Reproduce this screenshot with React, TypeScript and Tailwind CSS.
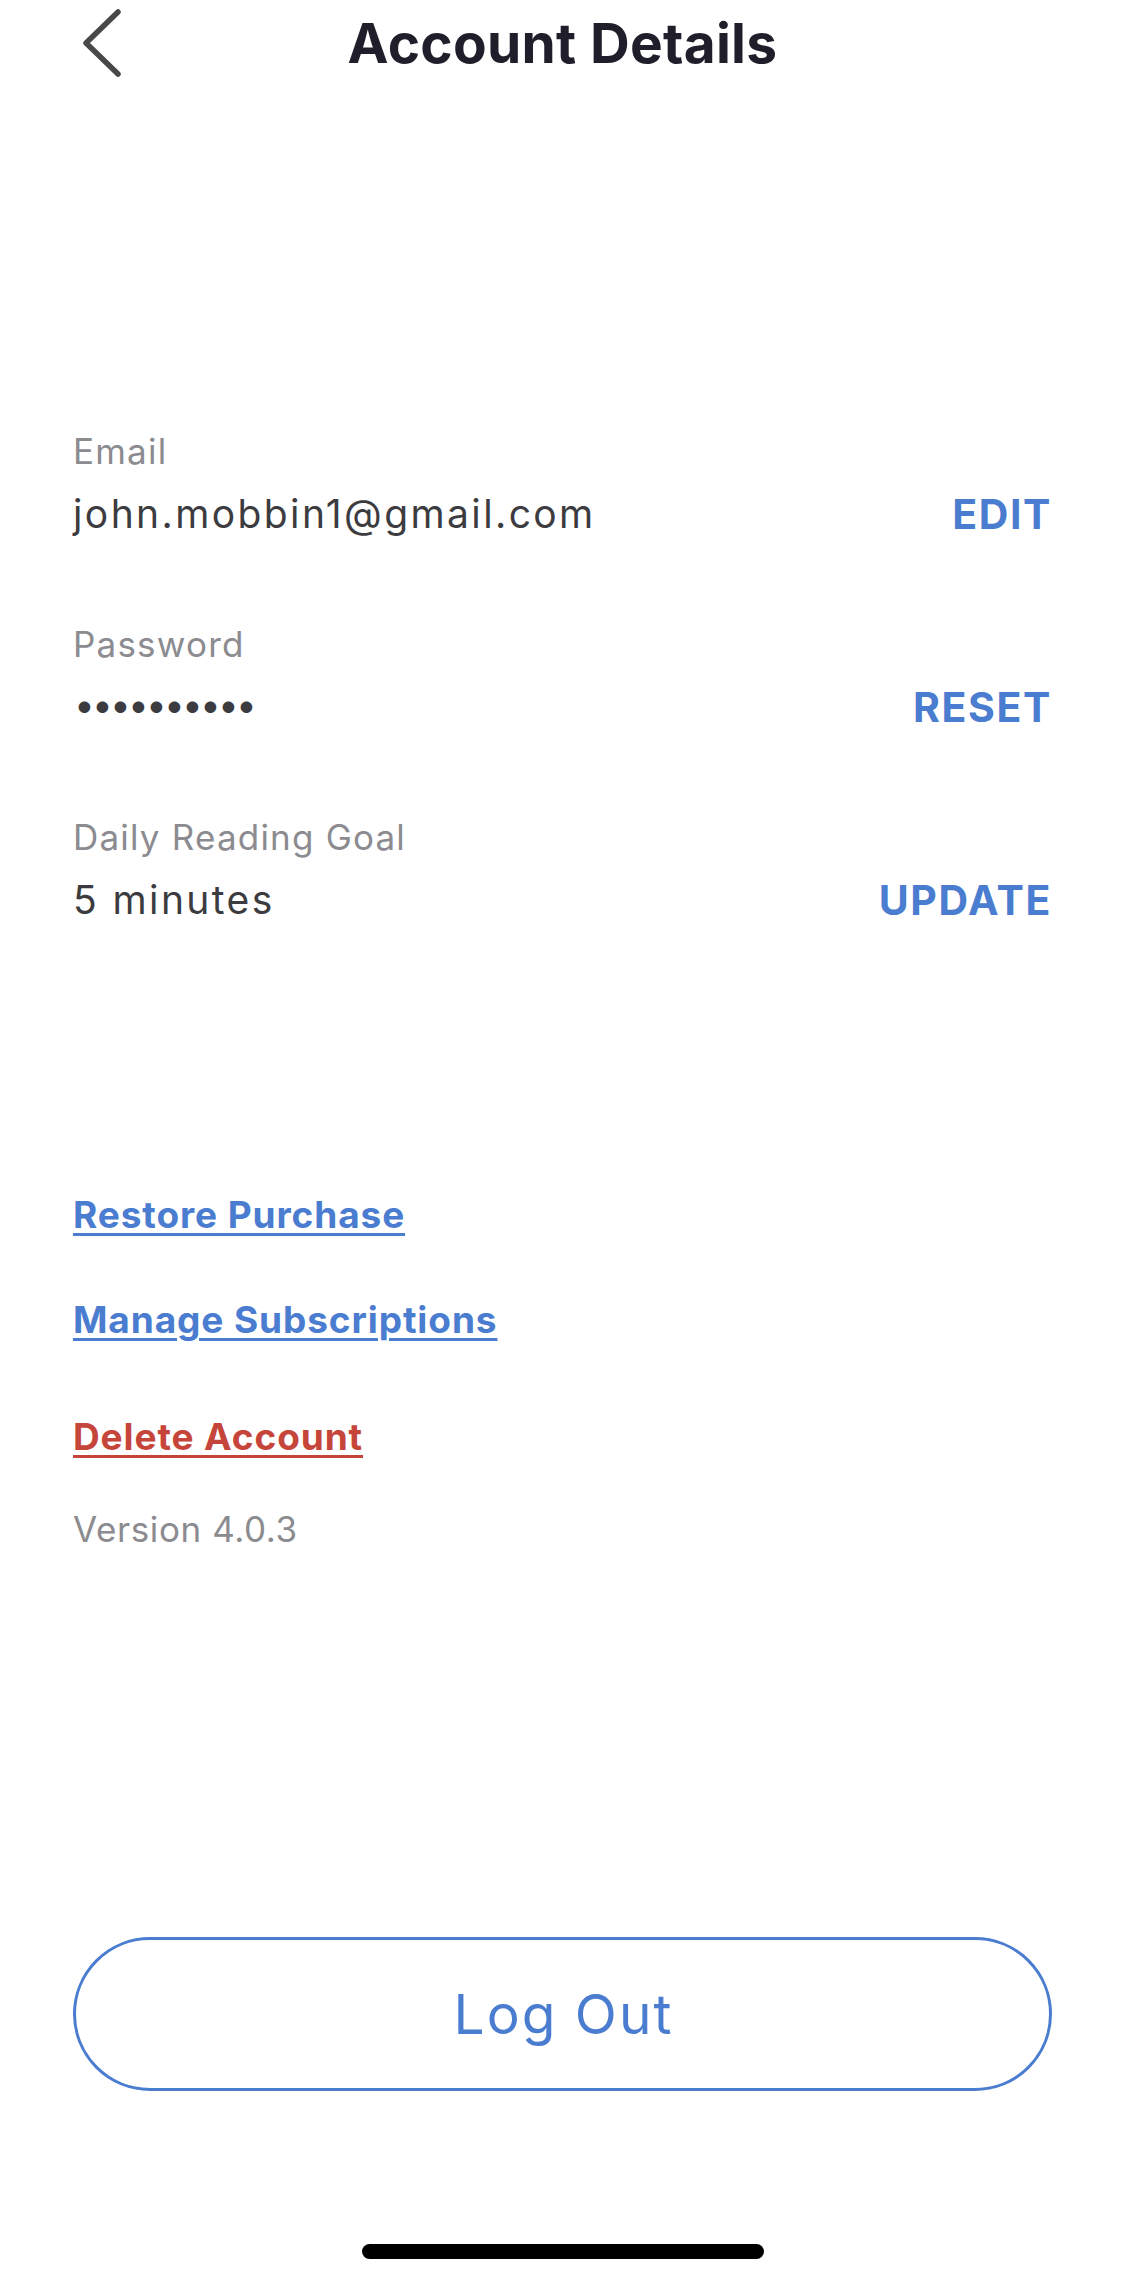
import React from "react";

const font = { fontFamily: "Inter, 'Noto Sans', sans-serif" };

const fields = [
  { label: "Email", value: "john.mobbin1@gmail.com", action: "EDIT" },
  { label: "Password", value: "••••••••••", action: "RESET", secret: true },
  { label: "Daily Reading Goal", value: "5 minutes", action: "UPDATE" },
];

function BackChevron() {
  return (
    <svg width="44" height="70" viewBox="0 0 44 70" fill="none" className="ml-[8px]">
      <path
        d="M37 4 L5 35 L37 66"
        stroke="#48484a"
        strokeWidth="5.5"
        strokeLinecap="round"
        strokeLinejoin="round"
      />
    </svg>
  );
}

export default function App() {
  return (
    <div
      style={font}
      className="w-[1125px] h-[2284px] bg-white flex flex-col px-[73px] overflow-hidden"
    >
      {/* header */}
      <div className="h-[86px] grid grid-cols-[1fr_auto_1fr] items-center">
        <div className="flex items-center">
          <BackChevron />
        </div>
        <h1 className="text-[55px] leading-none font-bold text-[#211e2b] tracking-[0.3px]">
          Account Details
        </h1>
        <div />
      </div>

      {/* fields */}
      <div className="mt-[345px] flex flex-col">
        {fields.map((f, i) => (
          <div key={f.label} className={i === 0 ? "" : "mt-[86px]"}>
            <div className="text-[35px] leading-[40px] tracking-[1.2px] text-[#8b8b90]">
              {f.label}
            </div>
            <div className="mt-[19px] h-[48px] flex items-center justify-between">
              {f.secret ? (
                <span className="text-[37px] leading-[44px] tracking-[-2.8px] text-[#3c3c40] pl-[1px] pb-[5px]">
                  {f.value}
                </span>
              ) : (
                <span className="text-[39px] leading-[48px] tracking-[2.4px] text-[#3c3c40]">
                  {f.value}
                </span>
              )}
              <button className="text-[41px] leading-[48px] font-bold tracking-[1.6px] text-[#4a7cd0]">
                {f.action}
              </button>
            </div>
          </div>
        ))}
      </div>

      {/* links */}
      <div className="mt-[267px] flex flex-col items-start">
        <a className="text-[37px] leading-[48px] font-bold tracking-[0.9px] text-[#4a7cd0] underline decoration-[3px] underline-offset-[5px]">
          Restore Purchase
        </a>
        <a className="mt-[57px] text-[37px] leading-[48px] font-bold tracking-[0.9px] text-[#4a7cd0] underline decoration-[3px] underline-offset-[5px]">
          Manage Subscriptions
        </a>
        <a className="mt-[69px] text-[37px] leading-[48px] font-bold tracking-[0.9px] text-[#c6453b] underline decoration-[3px] underline-offset-[5px]">
          Delete Account
        </a>
        <div className="mt-[48px] text-[35px] leading-[40px] tracking-[0.6px] text-[#8b8b90]">
          Version 4.0.3
        </div>
      </div>

      {/* log out */}
      <button className="mt-[388px] h-[154px] w-full rounded-full border-[3px] border-[#4a7cd0] flex items-center justify-center">
        <span className="text-[55px] leading-none tracking-[2px] text-[#4a7cd0] pl-[2px]">
          Log Out
        </span>
      </button>

      {/* home indicator */}
      <div className="mt-[153px] mx-auto w-[402px] h-[15px] rounded-full bg-black" />
    </div>
  );
}
